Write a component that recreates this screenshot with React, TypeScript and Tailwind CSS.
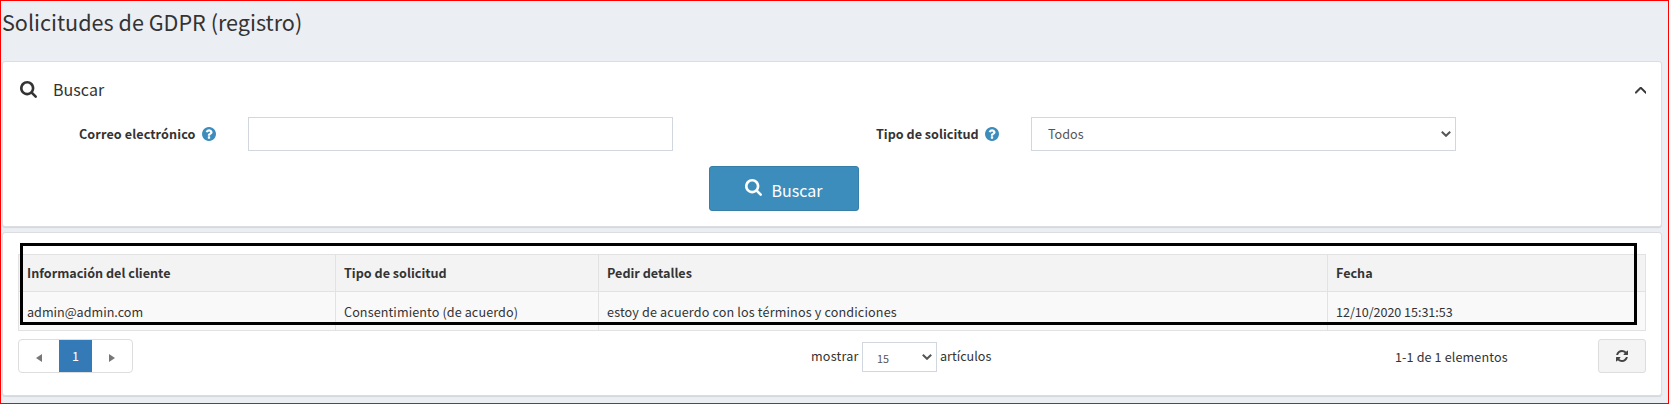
import type { ReactNode } from 'react';

const SEARCH =
  'M1152 832q0-185-131.5-316.5T704 384 387.5 515.5 256 832t131.5 316.5T704 1280t316.5-131.5T1152 832zm512 832q0 52-38 90t-90 38q-54 0-90-38l-343-342q-179 124-399 124-143 0-273.5-55.5t-225-150-150-225T0 832t55.5-273.5 150-225 225-150T704 128t273.5 55.5 225 150 150 225T1408 832q0 220-124 399l343 343q37 37 37 90z';
const QUESTION =
  'M1024 1376v-192q0-14-9-23t-23-9h-192q-14 0-23 9t-9 23v192q0 14 9 23t23 9h192q14 0 23-9t9-23zm256-672q0-88-55.5-163t-138.5-116-170-41q-243 0-371 213-15 24 8 42l132 100q7 6 19 6 16 0 25-12 53-68 86-92 34-24 86-24 48 0 85.5 26t37.5 59q0 38-20 61t-68 45q-63 28-115.5 86.5t-52.5 125.5v36q0 14 9 23t23 9h192q14 0 23-9t9-23q0-19 21.5-49.5t54.5-49.5q32-18 49-28.5t46-35 44.5-48 28-60.5 12.5-81zm384 192q0 209-103 385.5t-279.5 279.5-385.5 103-385.5-103-279.5-279.5-103-385.5 103-385.5 279.5-279.5 385.5-103 385.5 103 279.5 279.5 103 385.5z';
const REFRESH =
  'M1639 1056q0 5-1 7-64 268-268 434.5t-478 166.5q-146 0-282.5-55t-243.5-157l-129 129q-19 19-45 19t-45-19-19-45v-448q0-26 19-45t45-19h448q26 0 45 19t19 45-19 45l-137 137q71 66 161 102t187 36q134 0 250-65t186-179q11-17 53-117 8-23 30-23h192q13 0 22.5 9.5t9.5 22.5zm25-800v448q0 26-19 45t-45 19h-448q-26 0-45-19t-19-45 19-45l138-138q-148-137-349-137-134 0-250 65t-186 179q-11 17-53 117-8 23-30 23h-199q-13 0-22.5-9.5t-9.5-22.5v-7q65-268 270-434.5t480-166.5q146 0 284 55.5t245 156.5l130-129q19-19 45-19t45 19 19 45z';

function SearchIcon({ className }: { className: string }) {
  return (
    <svg viewBox="0 128 1664 1664" className={className} fill="currentColor">
      <path d={SEARCH} />
    </svg>
  );
}

function Help() {
  return (
    <svg viewBox="128 128 1536 1536" className="ml-[7px] h-3.5 w-3.5 shrink-0 text-[#3c8dbc]" fill="currentColor">
      <path d={QUESTION} />
    </svg>
  );
}

function Chevron() {
  return (
    <svg viewBox="0 0 10 6" className="h-1.5 w-2.5 text-[#555]" fill="none" stroke="currentColor" strokeWidth="2">
      <path d="M0.8 0.8 5 4.8 9.2 0.8" />
    </svg>
  );
}

function Card({ className, children }: { className: string; children: ReactNode }) {
  return (
    <section className={`w-[1660px] rounded-[3px] border border-[#dcdde0] bg-white shadow-[0_1px_1px_rgba(0,0,0,0.1)] ${className}`}>
      {children}
    </section>
  );
}

const headers = ['Información del cliente', 'Tipo de solicitud', 'Pedir detalles', 'Fecha'];

export default function App() {
  return (
    <div className="relative h-[404px] w-[1669px] overflow-hidden border border-[#ff0000] bg-[#ebeef3] pl-px font-['Noto_Sans_CJK_SC','Noto_Sans',sans-serif] text-[12.6px] leading-5 text-[#333] whitespace-nowrap">
      <h1 className="flex h-[60px] items-start pt-[6px] text-[21.6px] leading-[30px]">Solicitudes de GDPR (registro)</h1>

      <Card className="h-[166px]">
        <div className="flex h-[55px] items-center pl-[17px] pr-[15px]">
          <SearchIcon className="h-[17px] w-[17px]" />
          <h2 className="-mt-0.5 ml-4 flex-1 text-base leading-6 tracking-[0.05px]">Buscar</h2>
          <svg viewBox="397 708 998 559" className="mt-0.5 h-[6.5px] w-[11.5px]" fill="currentColor" stroke="currentColor" strokeWidth="50">
            <path d="M1395 1184q0 13-10 23l-50 50q-10 10-23 10t-23-10l-393-393-393 393q-10 10-23 10t-23-10l-50-50q-10-10-10-23t10-23l466-466q10-10 23-10t23 10l466 466q10 10 10 23z" />
          </svg>
        </div>
        <div className="flex h-[34px] items-center">
          <label className="flex w-[245px] items-center pl-[76px] font-bold">
            <span className="w-[116px] tracking-[0.1px]">Correo electrónico</span>
            <Help />
          </label>
          <input className="h-[34px] w-[425px] border border-[#d2d6de] bg-white px-3 outline-none" />
          <label className="ml-[203px] flex w-[155px] items-center font-bold">
            <span className="w-[102px]">Tipo de solicitud</span>
            <Help />
          </label>
          <div className="flex h-[34px] w-[425px] items-center justify-between border border-[#d2d6de] pl-4 pr-1 text-[#555]">
            <span>Todos</span>
            <Chevron />
          </div>
        </div>
        <button className="ml-[706px] mt-[15px] flex h-[45px] w-[150px] items-start rounded-[3px] border border-[#367fa9] bg-[#3c8dbc] pl-[35px] pt-3 text-base leading-6 text-white">
          <SearchIcon className="h-[17px] w-[17px]" />
          <span className="-mt-px ml-[9.5px]">Buscar</span>
        </button>
      </Card>

      <Card className="mt-[5px] h-[164px] px-[15px] pt-[21px]">
        <table className="w-[1628px] table-fixed border-separate border-spacing-0 border-b border-l border-[#e2e2e2] text-left">
          <colgroup>
            <col className="w-[317px]" />
            <col className="w-[263px]" />
            <col className="w-[729px]" />
            <col className="w-[318px]" />
          </colgroup>
          <thead>
            <tr>
              {headers.map((h) => (
                <th key={h} className="h-[37px] border-r border-t border-[#e2e2e2] bg-[#f3f3f3] p-0 pl-2 font-bold">
                  {h}
                </th>
              ))}
            </tr>
          </thead>
          <tbody>
            <tr className="[&>td]:h-[39px] [&>td]:border-r [&>td]:border-t [&>td]:border-[#e2e2e2] [&>td]:bg-[#f9f9f9] [&>td]:p-0 [&>td]:pl-2 [&>td]:pt-0.5">
              <td>admin@admin.com</td>
              <td className="tracking-[0.1px]">Consentimiento (de acuerdo)</td>
              <td className="tracking-[0.15px]">estoy de acuerdo con los términos y condiciones</td>
              <td className="tracking-[-0.05px]">12/10/2020 15:31:53</td>
            </tr>
          </tbody>
        </table>

        <div className="mt-2 flex h-[34px] items-center">
          <div className="flex h-[34px] w-[115px] overflow-hidden rounded border border-[#ddd]">
            <div className="flex w-10 items-center justify-center pt-1">
              <svg viewBox="0 0 6 8" className="h-2 w-1.5 fill-[#777]"><path d="M6 0v8L0 4z" /></svg>
            </div>
            <div className="-my-px flex w-[33px] items-center justify-center bg-[#337ab7] text-white">1</div>
            <div className="flex w-10 items-center justify-center pt-1">
              <svg viewBox="0 0 6 8" className="h-2 w-1.5 fill-[#777]"><path d="M0 0v8l6-4z" /></svg>
            </div>
          </div>
          <span className="ml-[678px] w-[51px] tracking-[0.2px]">mostrar</span>
          <div className="mt-0.5 flex h-[30px] w-[75px] items-center justify-between border border-[#d2d6de] pl-3.5 pr-1 text-[10.8px] text-[#555]">
            <span className="pt-px">15</span>
            <Chevron />
          </div>
          <span className="ml-[3px] w-[455px]">artículos</span>
          <span className="w-[203px] pt-0.5 tracking-[0.12px]">1-1 de 1 elementos</span>
          <button className="flex h-[34px] w-12 items-center justify-center rounded-[3px] border border-[#ddd] bg-[#f4f4f4] text-[#444]">
            <svg viewBox="128 128 1536 1536" className="h-3 w-3" fill="currentColor"><path d={REFRESH} /></svg>
          </button>
        </div>
      </Card>

      <div className="pointer-events-none absolute left-[19px] top-[242px] h-[82px] w-[1617px] border-[3px] border-black" />
    </div>
  );
}
